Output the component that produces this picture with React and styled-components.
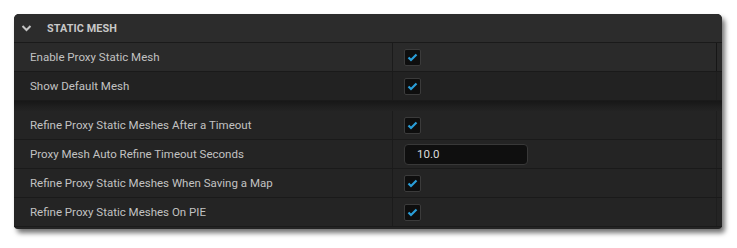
import React from "react";
import styled, { createGlobalStyle } from "styled-components";

const GlobalStyle = createGlobalStyle`
  body {
    margin: 0;
    background: #ffffff;
    font-family: Roboto, "Noto Sans", "Liberation Sans", sans-serif;
  }
`;

const Page = styled.div`
  padding: 14px 15px 20px 14px;
`;

const Panel = styled.div`
  width: 708px;
  background: #242424;
  border-radius: 5px 5px 4px 4px;
  box-shadow: 3px 4px 5px rgba(0, 0, 0, 0.55);
  overflow: hidden;
  padding-bottom: 2px;
`;

const Header = styled.div`
  height: 29px;
  display: flex;
  align-items: center;
  gap: 15px;
  padding-left: 7px;
  background: #2c2c2c;
  border-bottom: 1px solid #1a1a1a;
  box-sizing: border-box;
`;

const HeaderTitle = styled.span`
  color: #c8c8c8;
  font-size: 10.8px;
  font-weight: 700;
  letter-spacing: 0.1px;
`;

const Row = styled.div`
  height: 29px;
  display: grid;
  grid-template-columns: 378px 325px 5px;
  background: ${p => (p.shade === "light" ? "#2a2a2a" : p.shade === "mid" ? "#222222" : "#242424")};
  border-bottom: 1px solid #1a1a1a;
  box-sizing: border-box;
`;

const Name = styled.div`
  display: flex;
  align-items: center;
  padding-left: 16px;
  color: #c2c2c2;
  font-size: 11.5px;
`;

const Value = styled.div`
  display: flex;
  align-items: center;
  padding-left: 11px;
  border-left: 1px solid #1b1b1b;
  border-right: 1px solid ${p => (p.strong ? "#161616" : "#1e1e1e")};
`;

const Gap = styled.div`
  height: 10px;
  background: linear-gradient(#171717, #1f1f1f 60%, #232323);
`;

const Box = styled.div`
  width: 15px;
  height: 15px;
  background: #0e0e0e;
  border: 1px solid #3b3b3b;
  border-radius: 2px;
  display: flex;
  align-items: center;
  justify-content: center;
`;

const NumberInput = styled.div`
  width: 110px;
  height: 19px;
  background: #0f0f0f;
  border: 1px solid #383838;
  border-radius: 4px;
  display: flex;
  align-items: center;
  padding-left: 12px;
  box-sizing: content-box;
  color: #dcdcdc;
  font-size: 11.5px;
`;

const Chevron = () => (
  <svg width="11" height="8" viewBox="0 0 11 8">
    <path d="M1.5 2 L5.5 6 L9.5 2" fill="none" stroke="#c4c4c4" strokeWidth="2" />
  </svg>
);

const Check = () => (
  <Box>
    <svg width="11" height="9" viewBox="0 0 11 9">
      <path d="M1.5 4.5 L4 7 L9.5 1.5" fill="none" stroke="#2a9ed8" strokeWidth="2.2" />
    </svg>
  </Box>
);

const rows = [
  { name: "Enable Proxy Static Mesh", shade: "light", strong: true },
  { name: "Show Default Mesh", shade: "mid" },
  { gap: true },
  { name: "Refine Proxy Static Meshes After a Timeout" },
  { name: "Proxy Mesh Auto Refine Timeout Seconds", number: "10.0" },
  { name: "Refine Proxy Static Meshes When Saving a Map" },
  { name: "Refine Proxy Static Meshes On PIE" },
];

export default function App() {
  return (
    <Page>
      <GlobalStyle />
      <Panel>
        <Header>
          <Chevron />
          <HeaderTitle>STATIC MESH</HeaderTitle>
        </Header>
        {rows.map((r, i) =>
          r.gap ? (
            <Gap key={i} />
          ) : (
            <Row key={i} shade={r.shade}>
              <Name>{r.name}</Name>
              <Value strong={r.strong}>
                {r.number ? <NumberInput>{r.number}</NumberInput> : <Check />}
              </Value>
              <div />
            </Row>
          )
        )}
      </Panel>
    </Page>
  );
}
